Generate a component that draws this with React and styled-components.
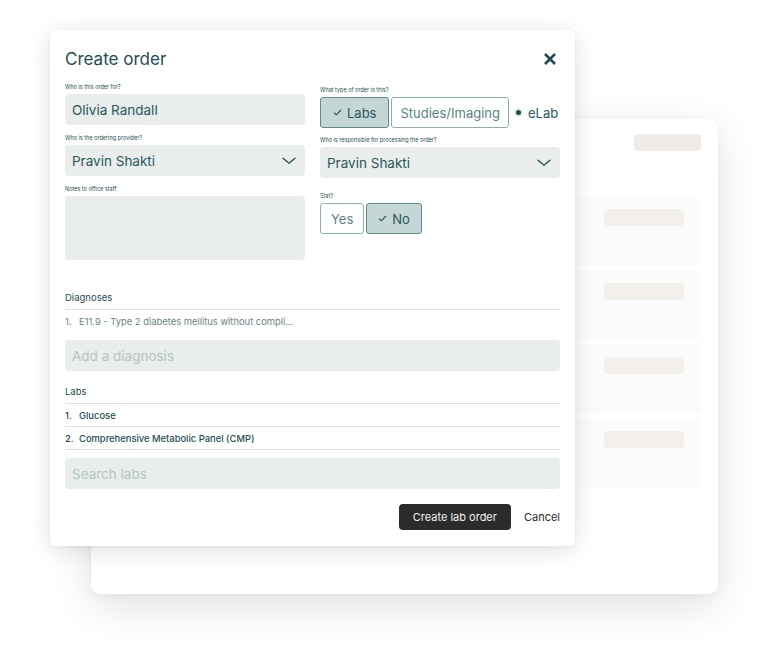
import styled, { createGlobalStyle } from "styled-components";

const Global = createGlobalStyle`
  html, body { margin: 0; padding: 0; background: #ffffff; }
  body { font-family: Inter, "Liberation Sans", sans-serif; }
  * { box-sizing: border-box; }
`;

const teal = "#1f4c52";

const Stage = styled.div`
  position: relative;
  width: 768px;
  height: 664px;
  overflow: hidden;
  background: #fff;
  padding: 119px 50px 0 91px;
`;

const BackCard = styled.div`
  width: 627px;
  height: 475px;
  background: #fff;
  border-radius: 9px;
  box-shadow: 0 12px 40px rgba(0, 0, 0, 0.12), 0 2px 8px rgba(0, 0, 0, 0.04);
  padding: 15px 17px 0 17px;
  display: flex;
  flex-direction: column;
`;

const BackTop = styled.div`
  display: flex;
  justify-content: flex-end;
  height: 63px;
`;

const Pill = styled.div`
  width: ${(p) => p.$w || 80}px;
  height: 17px;
  border-radius: 4px;
  background: ${(p) => p.$bg || "#f3efeb"};
`;

const BackList = styled.div`
  display: flex;
  flex-direction: column;
  gap: 5px;
`;

const BackRow = styled.div`
  height: 69px;
  border-radius: 5px;
  background: #fcfbfb;
  padding: 12px 17px 0 0;
  display: flex;
  justify-content: flex-end;
`;

const Modal = styled.div`
  position: absolute;
  left: 50px;
  top: 30px;
  width: 525px;
  height: 516px;
  background: #fff;
  border-radius: 5px;
  box-shadow: 0 4px 24px rgba(0, 0, 0, 0.12), 0 1px 4px rgba(0, 0, 0, 0.05);
  padding: 17px 15px 0 15px;
  display: flex;
  flex-direction: column;
  color: ${teal};
`;

const Header = styled.div`
  display: flex;
  justify-content: space-between;
  align-items: center;
  height: 24px;
`;

const Title = styled.h1`
  margin: 0;
  font-size: 17px;
  font-weight: 400;
  color: ${teal};
`;

const Close = styled.button`
  border: 0;
  background: none;
  padding: 0;
  margin-right: 3px;
  width: 14px;
  height: 14px;
  display: flex;
  color: ${teal};
`;

const Columns = styled.div`
  display: grid;
  grid-template-columns: 240px 240px;
  gap: 15px;
  margin-top: 13px;
`;

const Col = styled.div`
  display: flex;
  flex-direction: column;
  padding-top: ${(p) => p.$pt || 0}px;
`;

const Field = styled.div`
  display: flex;
  flex-direction: column;
  margin-bottom: ${(p) => p.$mb ?? 10}px;
`;

const Label = styled.div`
  font-size: 5.5px;
  line-height: 7px;
  color: ${teal};
  margin-bottom: 3px;
`;

const Input = styled.div`
  height: ${(p) => p.$h || 31}px;
  background: #e9edeb;
  border-radius: 4px;
  padding: 0 7px;
  display: flex;
  align-items: center;
  justify-content: space-between;
  font-size: 13.5px;
  color: ${(p) => (p.$placeholder ? "#b3c5c3" : "#2a575c")};
`;

const Toggles = styled.div`
  display: flex;
  align-items: center;
  gap: 2px;
`;

const Toggle = styled.div`
  height: 31px;
  padding: 0 ${(p) => p.$px || 11}px;
  border-radius: 3px;
  display: flex;
  align-items: center;
  gap: 5px;
  font-size: 13px;
  border: 1px solid ${(p) => (p.$on ? "#5f8d8b" : "#8fb0ae")};
  background: ${(p) => (p.$on ? "#c4d6d5" : "#fff")};
  color: ${(p) => (p.$on ? "#2a575c" : "#5a8381")};
`;

const Radio = styled.div`
  display: flex;
  align-items: center;
  gap: 7px;
  margin-left: 5px;
  font-size: 13px;
  color: #2a575c;
  &::before {
    content: "";
    width: 5px;
    height: 5px;
    border-radius: 50%;
    background: ${teal};
    box-shadow: 0 0 0 2px #e6ecea;
  }
`;

const Section = styled.div`
  display: flex;
  flex-direction: column;
  margin-top: ${(p) => p.$mt || 0}px;
`;

const SectionTitle = styled.div`
  font-size: 9.5px;
  color: ${teal};
  padding-bottom: 6px;
  border-bottom: 1px solid #d8e1e0;
`;

const Item = styled.div`
  height: 23px;
  display: flex;
  align-items: center;
  font-size: 9.4px;
  color: ${(p) => (p.$muted ? "#6a8482" : teal)};
  font-weight: ${(p) => (p.$muted ? 400 : 500)};
  border-bottom: ${(p) => (p.$line ? "1px solid #d8e1e0" : "none")};
`;

const Num = styled.span`
  width: 14px;
`;

const Footer = styled.div`
  display: flex;
  justify-content: flex-end;
  align-items: center;
  gap: 13px;
  margin-top: 15px;
`;

const Primary = styled.button`
  height: 26px;
  padding: 0 14px;
  border: 0;
  border-radius: 4px;
  background: #2b2b2b;
  color: #f2f2f2;
  font-family: inherit;
  font-size: 11px;
`;

const Ghost = styled.button`
  border: 0;
  background: none;
  padding: 0;
  color: #2b2b2b;
  font-family: inherit;
  font-size: 11px;
`;

const Check = () => (
  <svg width="9" height="7" viewBox="0 0 9 7" fill="none">
    <path d="M1 3.6 L3.3 5.8 L8 1" stroke={teal} strokeWidth="1.1" />
  </svg>
);

const Chevron = () => (
  <svg width="14" height="8" viewBox="0 0 14 8" fill="none" style={{ marginRight: 2 }}>
    <path d="M1 1.2 L7 6.2 L13 1.2" stroke={teal} strokeWidth="1.3" strokeLinecap="round" />
  </svg>
);

export default function App() {
  return (
    <>
      <Global />
      <Stage>
        <BackCard>
          <BackTop>
            <Pill $w={67} $bg="#efebe6" />
          </BackTop>
          <BackList>
            {[0, 1, 2, 3].map((i) => (
              <BackRow key={i}>
                <Pill $w={80} />
              </BackRow>
            ))}
          </BackList>
        </BackCard>

        <Modal>
          <Header>
            <Title>Create order</Title>
            <Close aria-label="Close">
              <svg width="14" height="14" viewBox="0 0 14 14">
                <path d="M2 2 L12 12 M12 2 L2 12" stroke={teal} strokeWidth="2.6" />
              </svg>
            </Close>
          </Header>

          <Columns>
            <Col>
              <Field>
                <Label>Who is this order for?</Label>
                <Input>Olivia Randall</Input>
              </Field>
              <Field>
                <Label>Who is the ordering provider?</Label>
                <Input>
                  Pravin Shakti
                  <Chevron />
                </Input>
              </Field>
              <Field $mb={0}>
                <Label>Notes to office staff</Label>
                <Input $h={64} />
              </Field>
            </Col>
            <Col $pt={3}>
              <Field $mb={9}>
                <Label>What type of order is this?</Label>
                <Toggles>
                  <Toggle $on $px={12}>
                    <Check />
                    Labs
                  </Toggle>
                  <Toggle $px={8}>Studies/Imaging</Toggle>
                  <Radio>eLab</Radio>
                </Toggles>
              </Field>
              <Field $mb={15}>
                <Label>Who is responsible for processing the order?</Label>
                <Input>
                  Pravin Shakti
                  <Chevron />
                </Input>
              </Field>
              <Field $mb={0}>
                <Label>Stat?</Label>
                <Toggles>
                  <Toggle $px={10}>Yes</Toggle>
                  <Toggle $on $px={11}>
                    <Check />
                    No
                  </Toggle>
                </Toggles>
              </Field>
            </Col>
          </Columns>

          <Section $mt={32}>
            <SectionTitle>Diagnoses</SectionTitle>
            <Item $muted>
              <Num>1.</Num>E11.9 - Type 2 diabetes mellitus without compli...
            </Item>
            <Input $placeholder style={{ marginTop: 7 }}>Add a diagnosis</Input>
          </Section>

          <Section $mt={15}>
            <SectionTitle>Labs</SectionTitle>
            <Item $line>
              <Num>1.</Num>Glucose
            </Item>
            <Item $line>
              <Num>2.</Num>Comprehensive Metabolic Panel (CMP)
            </Item>
            <Input $placeholder style={{ marginTop: 8 }}>Search labs</Input>
          </Section>

          <Footer>
            <Primary>Create lab order</Primary>
            <Ghost>Cancel</Ghost>
          </Footer>
        </Modal>
      </Stage>
    </>
  );
}
